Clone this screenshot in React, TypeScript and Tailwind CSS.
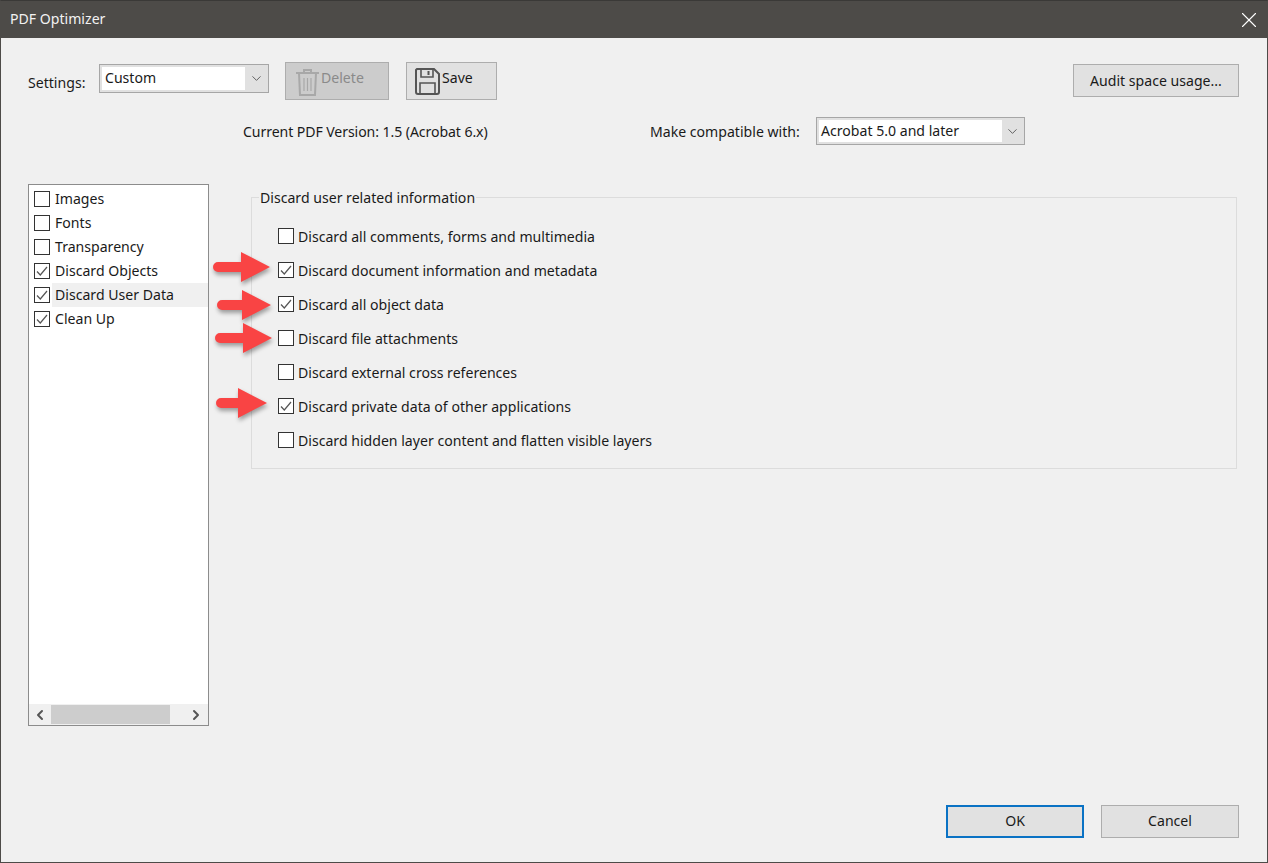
import { ChevronDown, ChevronLeft, ChevronRight, X } from "lucide-react";

const font = "font-['Noto_Sans','Open_Sans',sans-serif]";

function Check({ on }: { on: boolean }) {
  return (
    <span className="w-[16px] h-[16px] shrink-0 border border-[#333333] bg-white flex items-center justify-center">
      {on && (
        <svg width="14" height="14" viewBox="0 0 14 14" fill="none">
          <path d="M2 7.5 L5.3 11 L12 3" stroke="#555555" strokeWidth="1.2" />
        </svg>
      )}
    </span>
  );
}

function Arrow({ left, top, width }: { left: number; top: number; width: number }) {
  const neck = width - 29;
  return (
    <svg
      className="absolute drop-shadow-[1px_3px_2px_rgba(0,0,0,0.35)]"
      style={{ left, top }}
      width={width}
      height="30"
      viewBox={`0 0 ${width} 30`}
    >
      <path
        d={`M5 10 H${neck} V0 L${width} 15 L${neck} 30 V20 H5 A5 5 0 0 1 5 10 Z`}
        fill="#f94444"
      />
    </svg>
  );
}

const listItems = [
  { label: "Images", on: false },
  { label: "Fonts", on: false },
  { label: "Transparency", on: false },
  { label: "Discard Objects", on: true },
  { label: "Discard User Data", on: true, active: true },
  { label: "Clean Up", on: true },
];

const options = [
  { label: "Discard all comments, forms and multimedia", on: false },
  { label: "Discard document information and metadata", on: true },
  { label: "Discard all object data", on: true },
  { label: "Discard file attachments", on: false },
  { label: "Discard external cross references", on: false },
  { label: "Discard private data of other applications", on: true },
  { label: "Discard hidden layer content and flatten visible layers", on: false },
];

export default function App() {
  return (
    <div className={`${font} relative w-[1268px] h-[863px] flex flex-col bg-[#f0f0f0] border border-[#4d4b48] border-t-[#3a3937] text-[14.1px] leading-[20px] text-[#1a1a1a] overflow-hidden`}>
      <div className="h-[37px] shrink-0 bg-[#4d4b48] text-[#f2f2f2] flex items-center justify-between pl-[9px] pr-[5px]">
        <span className="pb-[2px]">PDF Optimizer</span>
        <X size={26} strokeWidth={1} className="text-white" />
      </div>

      <div className="flex items-start pl-[27px] pr-[28px] pt-[24px] h-[79px] shrink-0">
        <span className="mt-[11px] w-[71px]">Settings:</span>
        <div className="mt-[2px] w-[170px] h-[29px] border border-[#a6a6a6] bg-[#e1e1e1] flex items-center">
          <div className="w-[143px] h-[23px] ml-[2px] bg-white pl-[3px] pb-[2px] flex items-center">Custom</div>
          <ChevronDown size={15} strokeWidth={1.3} className="ml-[4px] text-[#444444]" />
        </div>
        <button className="ml-[16px] w-[104px] h-[38px] border border-[#adadad] bg-[#cccccc] text-[#8a8a8a] flex items-start pl-[9px] pt-[5px] gap-[1px]">
          <svg width="25" height="29" viewBox="0 0 25 29" fill="none" stroke="#a8a8a8" strokeWidth="2">
            <path d="M1 5 H24 M9 5 V2 H16 V5 M4 5 L5 27 H20 L21 5" />
            <path d="M9 10 V23 M12.5 10 V23 M16 10 V23" strokeWidth="1.2" />
          </svg>
          <span>Delete</span>
        </button>
        <button className="ml-[17px] w-[91px] h-[38px] border border-[#adadad] bg-[#e1e1e1] flex items-start pl-[8px] pt-[5px] gap-[2px]">
          <svg width="25" height="27" viewBox="0 0 25 27" fill="none" stroke="#555555" strokeWidth="2">
            <path d="M2 1 H19 L24 6 V24 A2 2 0 0 1 22 26 H3 A2 2 0 0 1 1 24 V2 Z" />
            <path d="M6 1 V9 H18 V1 M5 26 V15 H20 V26" strokeWidth="1.6" />
            <path d="M13.5 3 V7" strokeWidth="2" />
          </svg>
          <span>Save</span>
        </button>
        <button className="ml-auto mt-[2px] w-[166px] h-[33px] border border-[#adadad] bg-[#e1e1e1] text-center">
          Audit space usage...
        </button>
      </div>

      <div className="flex items-center h-[28px] shrink-0 pl-[242px]">
        <span className="w-[407px] pt-[2px] tracking-[-0.08px]">Current PDF Version: 1.5 (Acrobat 6.x)</span>
        <span className="w-[166px] pt-[2px]">Make compatible with:</span>
        <div className="w-[209px] h-[28px] border border-[#a6a6a6] bg-[#e1e1e1] flex items-center">
          <div className="w-[183px] h-[22px] ml-[2px] bg-white pl-[2px] pb-[1px] flex items-center">Acrobat 5.0 and later</div>
          <ChevronDown size={15} strokeWidth={1.3} className="ml-[3px] text-[#444444]" />
        </div>
      </div>

      <div className="flex items-start pl-[27px] pt-[39px] shrink-0">
        <div className="w-[181px] h-[542px] border border-[#8c8c8c] bg-white flex flex-col">
          <div className="flex-1 pt-[2px] pl-[5px]">
            {listItems.map((item) => (
              <div key={item.label} className="h-[24px] flex items-center gap-[2px]">
                <Check on={item.on} />
                <span className={`flex-1 h-[24px] pl-[3px] flex items-center ${item.active ? "bg-[#f0f0f0]" : ""}`}>
                  {item.label}
                </span>
              </div>
            ))}
          </div>
          <div className="h-[21px] bg-[#f0f0f0] flex items-center">
            <ChevronLeft size={16} strokeWidth={3} className="ml-[3px] text-[#555555]" />
            <div className="ml-[3px] w-[119px] h-[19px] bg-[#cdcdcd]" />
            <ChevronRight size={16} strokeWidth={3} className="ml-auto mr-[4px] text-[#555555]" />
          </div>
        </div>

        <fieldset className="ml-[42px] mt-[3px] w-[986px] h-[282px] border border-[#dcdcdc] pl-[26px] pt-[12px]">
          <legend className="ml-[-19px] px-[1px] mb-0">
            <span className="block translate-y-[1px]">Discard user related information</span>
          </legend>
          {options.map((o) => (
            <div key={o.label} className="h-[34px] flex items-center gap-[4px]">
              <Check on={o.on} />
              <span className="pt-[2px]">{o.label}</span>
            </div>
          ))}
        </fieldset>
      </div>

      <div className="mt-auto flex justify-end gap-[17px] pr-[28px] pb-[24px]">
        <button className="w-[138px] h-[33px] border-2 border-[#0a72c4] bg-[#e1e1e1] pb-[2px]">OK</button>
        <button className="w-[138px] h-[33px] border border-[#adadad] bg-[#e1e1e1] pb-[2px]">Cancel</button>
      </div>

      <Arrow left={212} top={251} width={57} />
      <Arrow left={216} top={289} width={54} />
      <Arrow left={214} top={322} width={57} />
      <Arrow left={215} top={387} width={51} />
    </div>
  );
}
